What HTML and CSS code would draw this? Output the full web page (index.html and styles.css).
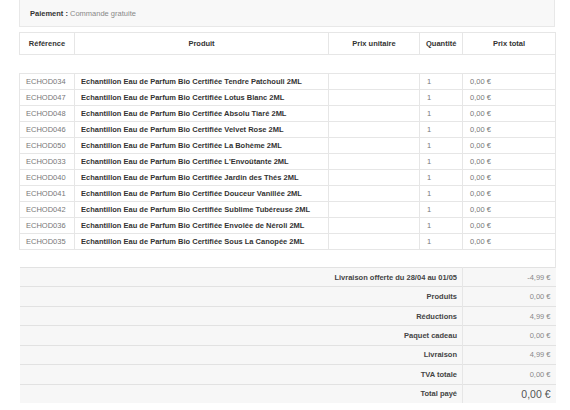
FILE: index.html
```html
<!DOCTYPE html>
<html lang="fr">
<head>
<meta charset="utf-8">
<title>Commande</title>
<link rel="stylesheet" href="styles.css">
</head>
<body>
<div class="page">
  <div class="payment"><strong>Paiement :</strong> Commande gratuite</div>
  <table class="order">
    <colgroup>
      <col class="c-ref"><col class="c-prod"><col class="c-unit"><col class="c-qty"><col class="c-total">
    </colgroup>
    <thead>
      <tr><th>Référence</th><th>Produit</th><th>Prix unitaire</th><th>Quantité</th><th>Prix total</th></tr>
    </thead>
    <tbody>
      <tr class="spacer"><td colspan="5"></td></tr>
      <tr><td class="ref">ECHOD034</td><td class="prod">Echantillon Eau de Parfum Bio Certifiée Tendre Patchouli 2ML</td><td></td><td class="qty">1</td><td class="price">0,00 €</td></tr>
      <tr><td class="ref">ECHOD047</td><td class="prod">Echantillon Eau de Parfum Bio Certifiée Lotus Blanc 2ML</td><td></td><td class="qty">1</td><td class="price">0,00 €</td></tr>
      <tr><td class="ref">ECHOD048</td><td class="prod">Echantillon Eau de Parfum Bio Certifiée Absolu Tiaré 2ML</td><td></td><td class="qty">1</td><td class="price">0,00 €</td></tr>
      <tr><td class="ref">ECHOD046</td><td class="prod">Echantillon Eau de Parfum Bio Certifiée Velvet Rose 2ML</td><td></td><td class="qty">1</td><td class="price">0,00 €</td></tr>
      <tr><td class="ref">ECHOD050</td><td class="prod">Echantillon Eau de Parfum Bio Certifiée La Bohème 2ML</td><td></td><td class="qty">1</td><td class="price">0,00 €</td></tr>
      <tr><td class="ref">ECHOD033</td><td class="prod">Echantillon Eau de Parfum Bio Certifiée L'Envoûtante 2ML</td><td></td><td class="qty">1</td><td class="price">0,00 €</td></tr>
      <tr><td class="ref">ECHOD040</td><td class="prod">Echantillon Eau de Parfum Bio Certifiée Jardin des Thés 2ML</td><td></td><td class="qty">1</td><td class="price">0,00 €</td></tr>
      <tr><td class="ref">ECHOD041</td><td class="prod">Echantillon Eau de Parfum Bio Certifiée Douceur Vanillée 2ML</td><td></td><td class="qty">1</td><td class="price">0,00 €</td></tr>
      <tr><td class="ref">ECHOD042</td><td class="prod">Echantillon Eau de Parfum Bio Certifiée Sublime Tubéreuse 2ML</td><td></td><td class="qty">1</td><td class="price">0,00 €</td></tr>
      <tr><td class="ref">ECHOD036</td><td class="prod">Echantillon Eau de Parfum Bio Certifiée Envolée de Néroli 2ML</td><td></td><td class="qty">1</td><td class="price">0,00 €</td></tr>
      <tr><td class="ref">ECHOD035</td><td class="prod">Echantillon Eau de Parfum Bio Certifiée Sous La Canopée 2ML</td><td></td><td class="qty">1</td><td class="price">0,00 €</td></tr>
      <tr class="spacer bottom"><td colspan="5"></td></tr>
    </tbody>
    <tfoot>
      <tr class="first"><td colspan="4" class="label">Livraison offerte du 28/04 au 01/05</td><td class="value">-4,99 €</td></tr>
      <tr><td colspan="4" class="label">Produits</td><td class="value">0,00 €</td></tr>
      <tr><td colspan="4" class="label">Réductions</td><td class="value">4,99 €</td></tr>
      <tr><td colspan="4" class="label">Paquet cadeau</td><td class="value">0,00 €</td></tr>
      <tr><td colspan="4" class="label">Livraison</td><td class="value">4,99 €</td></tr>
      <tr><td colspan="4" class="label">TVA totale</td><td class="value">0,00 €</td></tr>
      <tr class="total"><td colspan="4" class="label">Total payé</td><td class="value">0,00 €</td></tr>
    </tfoot>
  </table>
</div>
</body>
</html>
```

FILE: styles.css
```css
html, body {
  margin: 0;
  padding: 0;
  background: #fff;
}

body {
  font-family: "Liberation Sans", Arial, sans-serif;
  font-size: 7.5px;
  color: #333;
}

.page {
  padding: 0 15px 0 19px;
}

.payment {
  box-sizing: border-box;
  width: 536px;
  height: 27px;
  padding: 9px 0 0 10px;
  background: #f8f8f8;
  border: 1px solid #e8e8e8;
  border-top: none;
  color: #888;
  line-height: 9px;
}

.payment strong {
  color: #333;
}

.order {
  margin-top: 5px;
  width: 536px;
  border-collapse: collapse;
  table-layout: fixed;
}

.c-ref { width: 55px; }
.c-prod { width: 254px; }
.c-unit { width: 91px; }
.c-qty { width: 43px; }
.c-total { width: 93px; }

.order th,
.order td {
  border: 1px solid #e6e6e6;
  padding: 0 6px;
  white-space: nowrap;
  overflow: hidden;
}

.order th {
  height: 21px;
  font-weight: bold;
  text-align: center;
  color: #333;
}

.order tbody tr {
  height: 16px;
}

.order tbody td {
  line-height: 9px;
  color: #777;
}

.order tbody td.prod {
  font-weight: bold;
  color: #333;
}

.order td.qty,
.order td.price {
  padding-left: 7px;
}

.order tr.spacer {
  height: 19px;
}

.order tr.spacer.bottom {
  height: 18px;
}

.order tr.spacer td {
  border-left: none;
  border-top: none;
  border-bottom: none;
}

.order tr.spacer:first-child td {
  border-top: 1px solid #e6e6e6;
}

.order tr.spacer.bottom td {
  border-top: 1px solid #e6e6e6;
}

.order tfoot tr {
  height: 19.43px;
  background: #f7f7f7;
}

.order tfoot td {
  border: none;
  border-top: 1px solid #e2e2e2;
  padding: 0 5px;
  line-height: 9px;
}

.order tfoot td.label {
  text-align: right;
  font-weight: bold;
  color: #444;
  border-right: 1px solid #e6e6e6;
}

.order tfoot td.value {
  text-align: right;
  color: #888;
  padding-right: 5px;
}

.order tfoot tr.total td.value {
  font-size: 10.5px;
  color: #555;
  line-height: 12px;
}
```
